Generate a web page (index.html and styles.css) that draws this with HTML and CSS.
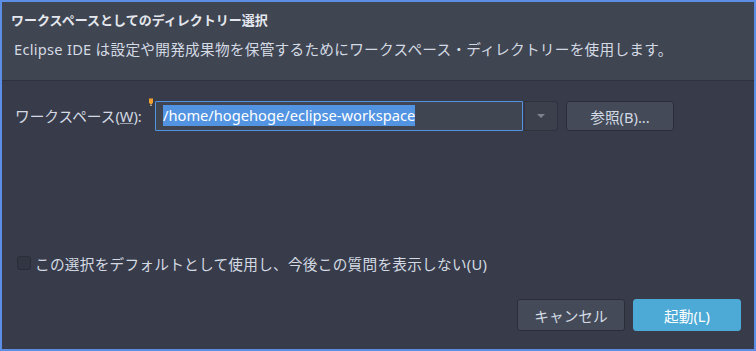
FILE: index.html
```html
<!DOCTYPE html>
<html lang="ja">
<head>
<meta charset="utf-8">
<link rel="stylesheet" href="styles.css">
</head>
<body>
<div class="window">
  <div class="header">
    <div class="title">ワークスペースとしてのディレクトリー選択</div>
    <div class="desc">Eclipse IDE は設定や開発成果物を保管するためにワークスペース・ディレクトリーを使用します。</div>
  </div>
  <div class="content">
    <div class="ws-row">
      <label class="ws-label">ワークスペース(<u>W</u>):</label>
      <div class="combo">
        <svg class="bulb" width="6" height="9" viewBox="0 0 6 9">
          <path d="M1 0.5h4v4l-1 1.5h-2l-1-1.5z" fill="#f0a030"/>
          <rect x="2" y="6.5" width="2" height="1.5" fill="#b0a080"/>
        </svg>
        <div class="entry"><span class="sel">/home/hogehoge/eclipse-workspace</span></div>
        <div class="drop"><span class="tri"></span></div>
      </div>
      <button class="btn browse">参照(B)...</button>
    </div>
    <div class="check-row">
      <span class="checkbox"></span>
      <span class="check-text">この選択をデフォルトとして使用し、今後この質問を表示しない(U)</span>
    </div>
    <div class="actions">
      <button class="btn cancel">キャンセル</button>
      <button class="btn launch">起動(L)</button>
    </div>
  </div>
</div>
</body>
</html>
```

FILE: styles.css
```css
html, body {
  margin: 0;
  padding: 0;
  background: #383c4a;
}
body {
  font-family: "Noto Sans", "Noto Sans CJK JP", sans-serif;
  color: #d3dae3;
  font-size: 14.67px;
}
.window {
  width: 756px;
  height: 351px;
  box-sizing: border-box;
  border: 2px solid #5b8ee4;
  display: flex;
  flex-direction: column;
  background: #383c4a;
}
.header {
  background: #404552;
  height: 79px;
  box-sizing: border-box;
  padding: 10px 0 0 9px;
  border-bottom: 1px solid #2f323e;
}
.title {
  font-size: 13px;
  font-weight: bold;
  line-height: 16px;
  color: #e4e8ee;
}
.desc {
  margin-top: 11px;
  margin-left: 3px;
  line-height: 20px;
  letter-spacing: 0.26px;
}
.content {
  flex: 1;
  display: flex;
  flex-direction: column;
  padding: 20px 13px 0 13px;
}
.ws-row {
  display: flex;
  align-items: center;
  height: 30px;
}
.ws-label {
  width: 140px;
  line-height: 20px;
}
.ws-label u {
  text-decoration-color: #a0a6b0;
}
.combo {
  position: relative;
  display: flex;
  height: 30px;
}
.bulb {
  position: absolute;
  left: -7px;
  top: -3px;
}
.entry {
  width: 368px;
  box-sizing: border-box;
  border: 1px solid #5294e2;
  background: #404552;
  padding: 3px 0 0 7px;
  line-height: 21px;
  border-radius: 1px;
}
.sel {
  background: #5294e2;
  color: #ffffff;
  display: inline-block;
  line-height: 21px;
}
.drop {
  width: 34px;
  margin-left: 1px;
  box-sizing: border-box;
  border: 1px solid #2f323e;
  background: #3c404d;
  border-radius: 0 3px 3px 0;
  display: flex;
  align-items: center;
  justify-content: center;
}
.tri {
  width: 0;
  height: 0;
  border-left: 4px solid transparent;
  border-right: 4px solid transparent;
  border-top: 4px solid #7c818c;
}
.btn {
  font-family: "Noto Sans", "Noto Sans CJK JP", sans-serif;
  font-size: 14.67px;
  color: #d3dae3;
  background: #444a58;
  border: 1px solid #2b2e39;
  border-radius: 3px;
  padding: 0;
  margin: 0;
}
.browse {
  margin-left: 8px;
  width: 108px;
  height: 30px;
}
.check-row {
  margin-top: 122px;
  display: flex;
  align-items: center;
  height: 20px;
  padding-left: 2px;
}
.checkbox {
  width: 14px;
  height: 14px;
  box-sizing: border-box;
  background: #323542;
  border: 1px solid #2a2d38;
  border-radius: 3px;
}
.check-text {
  margin-left: 4px;
  letter-spacing: 0.25px;
}
.actions {
  margin-top: 26px;
  display: flex;
  justify-content: flex-end;
  gap: 8px;
}
.cancel, .launch {
  width: 108px;
  height: 32px;
}
.launch {
  background: #4daad6;
  border-color: #4daad6;
  color: #ffffff;
}
```
